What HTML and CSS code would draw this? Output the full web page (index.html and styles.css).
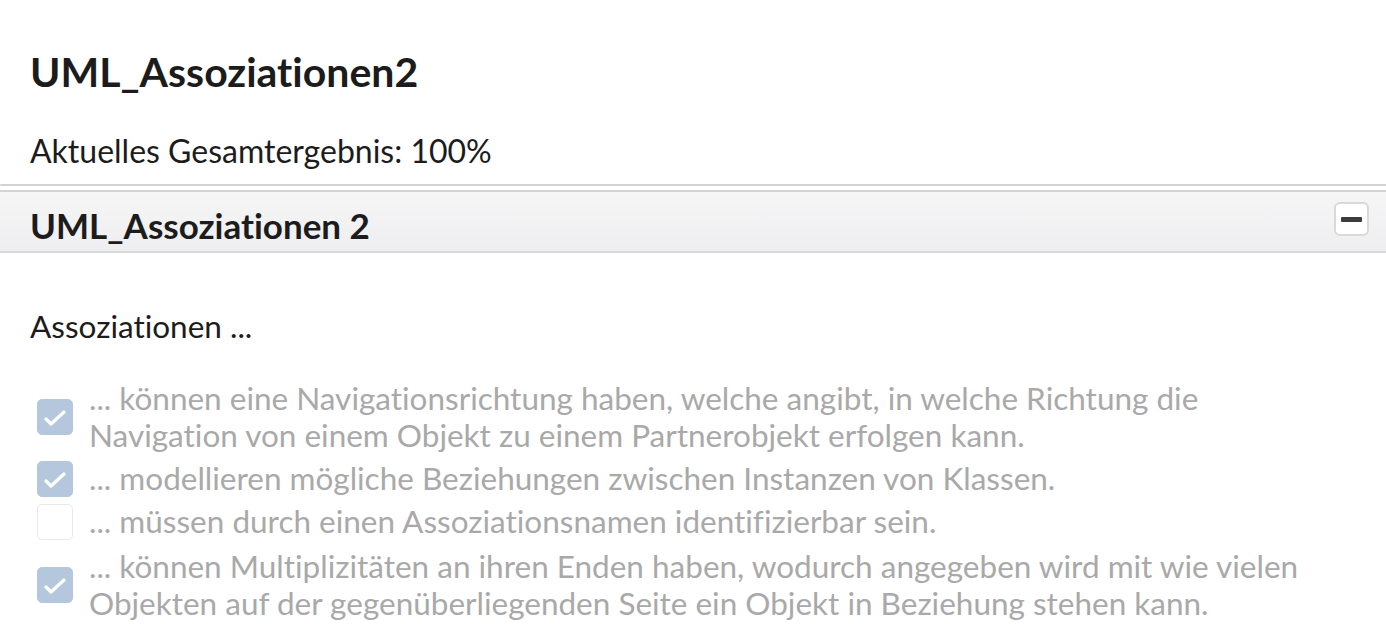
FILE: index.html
```html
<!DOCTYPE html>
<html lang="de">
<head>
<meta charset="utf-8">
<title>UML_Assoziationen2</title>
<link rel="stylesheet" href="styles.css">
</head>
<body>
<div class="page">
  <h1 class="title">UML_Assoziationen2</h1>
  <p class="score">Aktuelles Gesamtergebnis: 100%</p>
  <div class="divider"></div>
  <section class="panel">
    <div class="panel-head">
      <h2 class="panel-title">UML_Assoziationen 2</h2>
      <button class="toggle" aria-label="Einklappen"><span class="bar"></span></button>
    </div>
    <div class="panel-body">
      <p class="question">Assoziationen ...</p>
      <ul class="answers">
        <li class="answer">
          <span class="box checked"><svg viewBox="0 0 36 36" width="36" height="36"><path d="M9 20 L14 25 L27 13" fill="none" stroke="#fff" stroke-width="3.2" stroke-linecap="round" stroke-linejoin="round"/></svg></span>
          <span class="label">... können eine Navigationsrichtung haben, welche angibt, in welche Richtung die Navigation von einem Objekt zu einem Partnerobjekt erfolgen kann.</span>
        </li>
        <li class="answer">
          <span class="box checked"><svg viewBox="0 0 36 36" width="36" height="36"><path d="M9 20 L14 25 L27 13" fill="none" stroke="#fff" stroke-width="3.2" stroke-linecap="round" stroke-linejoin="round"/></svg></span>
          <span class="label">... modellieren mögliche Beziehungen zwischen Instanzen von Klassen.</span>
        </li>
        <li class="answer">
          <span class="box"></span>
          <span class="label">... müssen durch einen Assoziationsnamen identifizierbar sein.</span>
        </li>
        <li class="answer last">
          <span class="box checked"><svg viewBox="0 0 36 36" width="36" height="36"><path d="M9 20 L14 25 L27 13" fill="none" stroke="#fff" stroke-width="3.2" stroke-linecap="round" stroke-linejoin="round"/></svg></span>
          <span class="label">... können Multiplizitäten an ihren Enden haben, wodurch angegeben wird mit wie vielen Objekten auf der gegenüberliegenden Seite ein Objekt in Beziehung stehen kann.</span>
        </li>
      </ul>
    </div>
  </section>
</div>
</body>
</html>
```
FILE: styles.css
```css
* { box-sizing: border-box; }
html, body {
  margin: 0;
  padding: 0;
  background: #fff;
}
body {
  font-family: Lato, "Open Sans", sans-serif;
  font-variant-ligatures: no-common-ligatures;
  color: #1c1c1c;
}
.page {
  padding-top: 47px;
}
.title {
  margin: 0 0 0 30px;
  font-size: 41px;
  line-height: 50px;
  font-weight: 700;
  color: #1c1c1c;
}
.score {
  margin: 34px 0 0 30px;
  font-size: 32px;
  line-height: 40px;
  color: #1c1c1c;
}
.divider {
  margin-top: 13px;
  height: 2px;
  background: #d2d2d2;
  border-top-left-radius: 2px;
  border-bottom-left-radius: 2px;
}
.panel {
  margin-top: 4px;
}
.panel-head {
  display: flex;
  align-items: flex-start;
  justify-content: space-between;
  height: 63px;
  padding: 0 17px 0 30px;
  border-top: 2px solid #d4d4d4;
  border-bottom: 2px solid #dadada;
  background: linear-gradient(#f6f6f7, #eeeef0);
}
.panel-title {
  margin: 12px 0 0 0;
  font-size: 35px;
  line-height: 42px;
  font-weight: 700;
  color: #1c1c1c;
}
.toggle {
  display: flex;
  align-items: center;
  justify-content: center;
  margin-top: 10px;
  width: 35px;
  height: 34px;
  padding: 0;
  border: 2px solid #d9d9d9;
  border-radius: 6px;
  background: #fff;
}
.toggle .bar {
  display: block;
  width: 21px;
  height: 5px;
  border-radius: 1px;
  background: #3c3c3c;
}
.panel-body {
  padding: 0 60px 0 30px;
}
.question {
  margin: 54px 0 0 0;
  font-size: 31.5px;
  line-height: 38px;
  color: #1c1c1c;
}
.answers {
  list-style: none;
  margin: 35px 0 0 0;
  padding: 0;
}
.answer {
  display: flex;
  align-items: center;
  gap: 16px;
  margin-bottom: 6px;
}
.answer.last {
  margin-top: 8px;
}
.box {
  flex: 0 0 36px;
  width: 36px;
  height: 36px;
  margin: 0 0 0 7px;
  border-radius: 5px;
  border: 1px solid #e9e9e9;
  background: #fff;
}
.box.checked {
  border-color: #b5c7dc;
  background: #b5c7dc;
}
.box svg {
  display: block;
  margin: -1px;
}
.label {
  font-size: 31.5px;
  line-height: 37px;
  color: #a9a9a9;
}
```
